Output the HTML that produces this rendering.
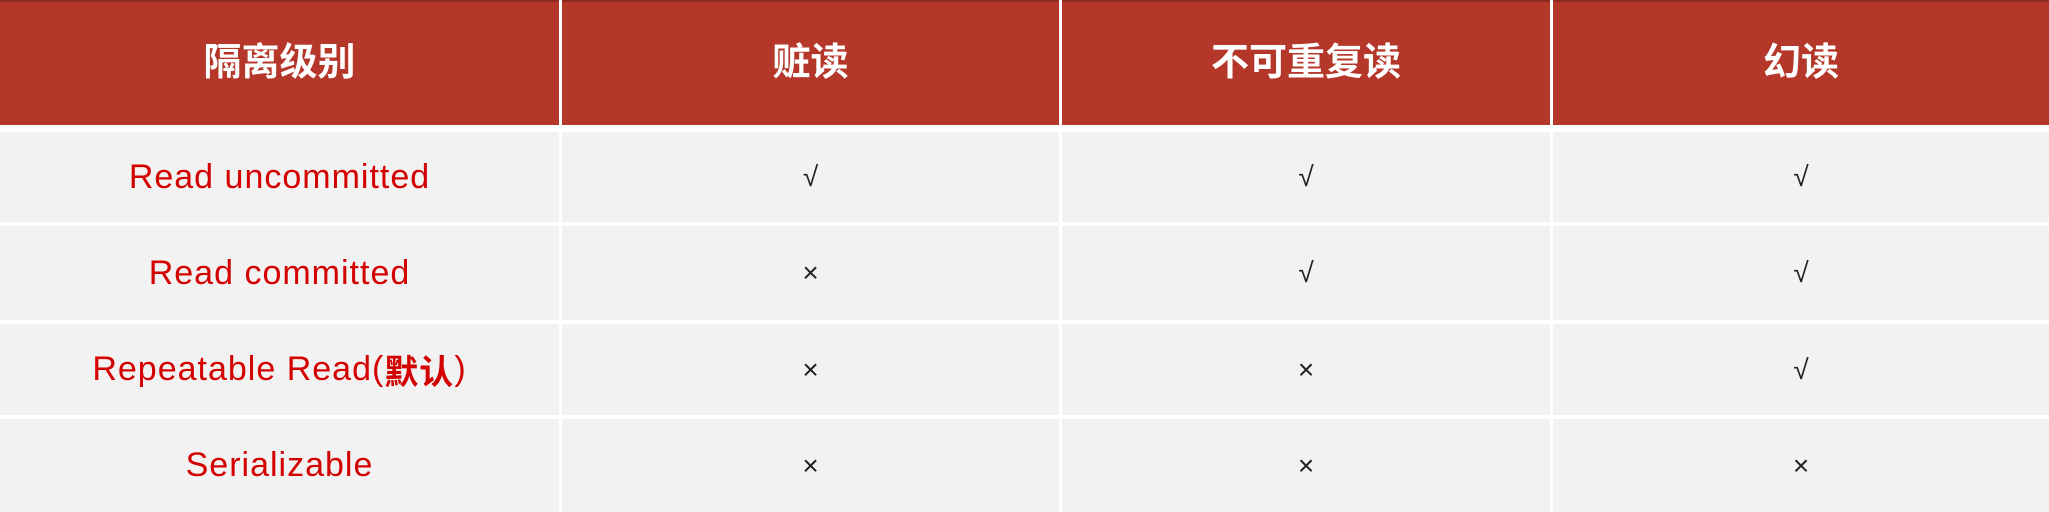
<!DOCTYPE html>
<html><head><meta charset="utf-8"><style>
html,body{margin:0;padding:0;width:2049px;height:512px;overflow:hidden;background:#fff}
.c{position:absolute;display:flex;align-items:center;justify-content:center}
.h{background:#b5372a;color:#fff;font:bold 38px "Liberation Sans","Noto Sans CJK SC",sans-serif;top:0;height:125px;border-top:2px solid #8f2a20;box-sizing:border-box;padding-bottom:10px}
.b{background:#f2f2f2;font:34px "Liberation Sans","Noto Sans CJK SC",sans-serif}
.r{color:#d40000;letter-spacing:1px}
.k{color:#222;font-size:28px}
</style></head><body>
<div class="c h" style="left:0;width:559px">隔离级别</div>
<div class="c h" style="left:562px;width:497px">赃读</div>
<div class="c h" style="left:1062px;width:488px">不可重复读</div>
<div class="c h" style="left:1553px;width:496px">幻读</div>

<div class="c b r" style="left:0;width:559px;top:132px;height:90px">Read uncommitted</div>
<div class="c b k" style="left:562px;width:497px;top:132px;height:90px">√</div>
<div class="c b k" style="left:1062px;width:488px;top:132px;height:90px">√</div>
<div class="c b k" style="left:1553px;width:496px;top:132px;height:90px">√</div>

<div class="c b r" style="left:0;width:559px;top:226px;height:94px">Read committed</div>
<div class="c b k" style="left:562px;width:497px;top:226px;height:94px">×</div>
<div class="c b k" style="left:1062px;width:488px;top:226px;height:94px">√</div>
<div class="c b k" style="left:1553px;width:496px;top:226px;height:94px">√</div>

<div class="c b r" style="left:0;width:559px;top:324px;height:91px">Repeatable Read(<b>默认</b>)</div>
<div class="c b k" style="left:562px;width:497px;top:324px;height:91px">×</div>
<div class="c b k" style="left:1062px;width:488px;top:324px;height:91px">×</div>
<div class="c b k" style="left:1553px;width:496px;top:324px;height:91px">√</div>

<div class="c b r" style="left:0;width:559px;top:419px;height:93px">Serializable</div>
<div class="c b k" style="left:562px;width:497px;top:419px;height:93px">×</div>
<div class="c b k" style="left:1062px;width:488px;top:419px;height:93px">×</div>
<div class="c b k" style="left:1553px;width:496px;top:419px;height:93px">×</div>
</body></html>
